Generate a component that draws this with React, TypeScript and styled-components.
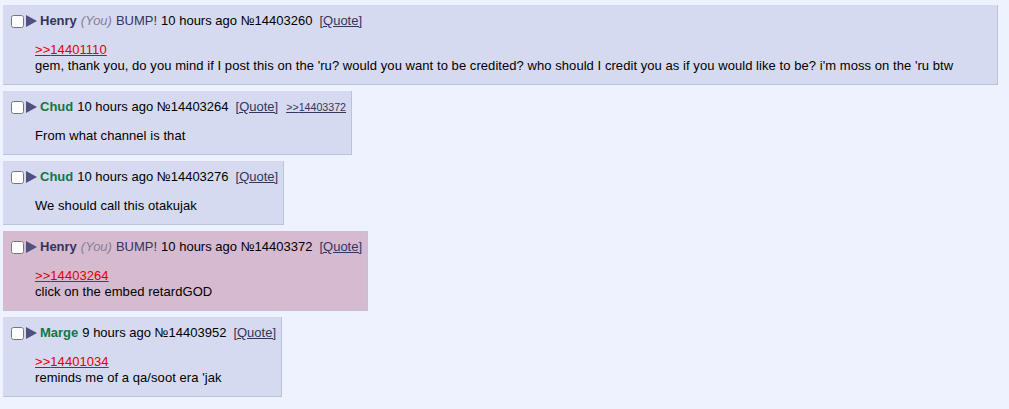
import React from 'react';
import styled, { createGlobalStyle } from 'styled-components';

// Types
interface Post {
  id: number;
  name: string;
  you?: boolean;
  bump?: boolean;
  time: string;
  quoteLink?: string;
  backlinks?: string[];
  lines: string[];
  highlight?: boolean;
}

// Thread data
const POSTS: Post[] = [
  {
    id: 14403260,
    name: 'Henry',
    you: true,
    bump: true,
    time: '10 hours ago',
    quoteLink: '14401110',
    lines: [
      "gem, thank you, do you mind if I post this on the 'ru? would you want to be credited? who should I credit you as if you would like to be? i'm moss on the 'ru btw",
    ],
  },
  {
    id: 14403264,
    name: 'Chud',
    time: '10 hours ago',
    backlinks: ['14403372'],
    lines: ['From what channel is that'],
  },
  {
    id: 14403276,
    name: 'Chud',
    time: '10 hours ago',
    lines: ['We should call this otakujak'],
  },
  {
    id: 14403372,
    name: 'Henry',
    you: true,
    bump: true,
    time: '10 hours ago',
    quoteLink: '14403264',
    lines: ['click on the embed retardGOD'],
    highlight: true,
  },
  {
    id: 14403952,
    name: 'Marge',
    time: '9 hours ago',
    quoteLink: '14401034',
    lines: ["reminds me of a qa/soot era 'jak"],
  },
];

const GlobalStyle = createGlobalStyle`
  html, body {
    margin: 0;
    padding: 0;
    background: #eef2ff;
  }
  body {
    font-family: Arial, 'Liberation Sans', Helvetica, sans-serif;
    font-size: 13px;
    color: #000;
  }
`;

// Styled components
const Thread = styled.div`
  padding: 5px 10px 12px 3px;
  min-height: 392px;
  background: #eef2ff;
`;

const PostBox = styled.div<{ $highlight?: boolean }>`
  display: table;
  margin-bottom: 6px;
  padding: 2px 2px 0 2px;
  background: ${p => (p.$highlight ? '#d6bad0' : '#d6daf0')};
  border-right: 1px solid #b7c5d9;
  border-bottom: 1px solid #b7c5d9;
`;

const PostInfo = styled.div`
  display: flex;
  align-items: center;
  height: 16px;
  margin-top: 6px;
  padding-right: 3px;
  line-height: 16px;
  white-space: nowrap;
`;

const Check = styled.input`
  width: 13px;
  height: 13px;
  margin: 1px 2px 0 6px;
`;

const Arrow = styled.svg`
  width: 11px;
  height: 12px;
  margin-right: 3px;
  flex: none;
`;

const Name = styled.span<{ $you?: boolean }>`
  font-weight: bold;
  color: ${p => (p.$you ? '#34345c' : '#117743')};
`;

const YouTag = styled.span`
  font-style: italic;
  color: #7f8297;
  margin-left: 4px;
`;

const Bump = styled.span`
  color: #34345c;
  margin-left: 4px;
`;

const Meta = styled.span`
  margin-left: 4px;
`;

const QuoteLink = styled.a`
  color: #34345c;
  text-decoration: underline;
  margin-left: 7px;
  cursor: pointer;
`;

const Backlink = styled.a`
  color: #34345c;
  font-size: 10.67px;
  text-decoration: underline;
  margin-left: 8px;
  cursor: pointer;
`;

const Body = styled.blockquote`
  margin: 13px 42px 10px 30px;
  line-height: 16px;
  letter-spacing: 0.06px;
`;

const RedLink = styled.a`
  display: block;
  color: #dd0000;
  text-decoration: underline;
  width: fit-content;
  margin-top: 1px;
`;

const PostView: React.FC<{ post: Post }> = ({ post }) => (
  <PostBox $highlight={post.highlight}>
    <PostInfo>
      <Check type="checkbox" />
      <Arrow viewBox="0 0 11 12">
        <polygon points="0,0 11,6 0,12" fill="#4e5080" />
      </Arrow>
      <Name $you={post.you}>{post.name}</Name>
      {post.you && <YouTag>(You)</YouTag>}
      {post.bump && <Bump>BUMP!</Bump>}
      <Meta>
        {post.time} №{post.id}
      </Meta>
      <QuoteLink>[Quote]</QuoteLink>
      {post.backlinks?.map(b => (
        <Backlink key={b}>&gt;&gt;{b}</Backlink>
      ))}
    </PostInfo>
    <Body>
      {post.quoteLink && <RedLink>&gt;&gt;{post.quoteLink}</RedLink>}
      {post.lines.map((l, i) => (
        <div key={i}>{l}</div>
      ))}
    </Body>
  </PostBox>
);

export default function App() {
  return (
    <>
      <GlobalStyle />
      <Thread>
        {POSTS.map(p => (
          <PostView key={p.id} post={p} />
        ))}
      </Thread>
    </>
  );
}
